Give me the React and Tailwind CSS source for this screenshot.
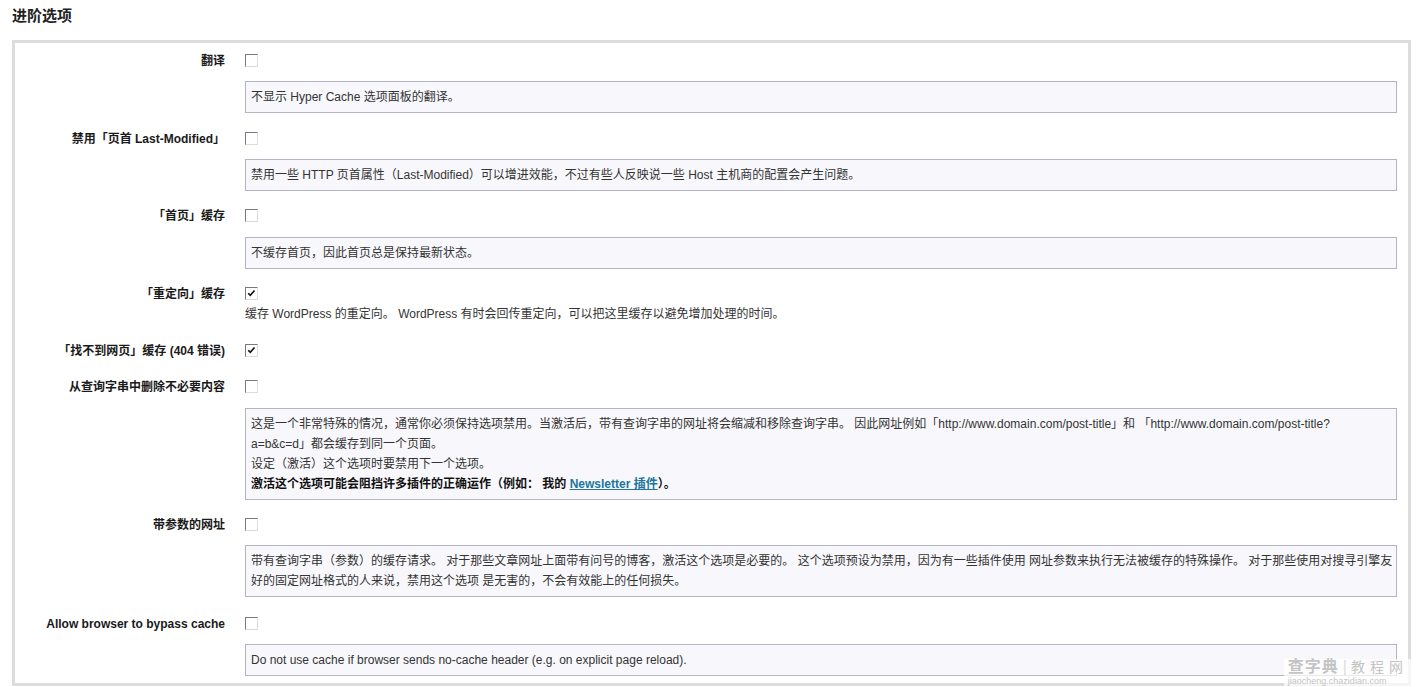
import React from "react";

const FONT = "font-['Liberation_Sans','Noto_Sans_CJK_SC',sans-serif]";

function Checkbox({ checked }) {
  return (
    <span className="relative block w-[13px] h-[13px] bg-white border border-t-[#7a7a7a] border-l-[#7a7a7a] border-r-[#dcdcdc] border-b-[#dcdcdc]">
      {checked && (
        <svg viewBox="0 0 11 11" className="absolute left-[1px] top-[1px] w-[9px] h-[9px]">
          <path d="M1.5 5.2 L4 7.8 L9.2 1.8" fill="none" stroke="#111" strokeWidth="2" />
        </svg>
      )}
    </span>
  );
}

function Option({ label, checked, className, boxClass, children, plain }) {
  return (
    <div className={className}>
      <div className="flex items-center h-6">
        <div className="w-[210px] pt-[1px] text-right text-[12px] font-bold text-[#1a1a1a] whitespace-nowrap">
          {label}
        </div>
        <div className="ml-5">
          <Checkbox checked={checked} />
        </div>
      </div>
      {children && (
        <div className="ml-[230px]">
          {plain ? (
            <div className="text-[12px] leading-[18px] text-[#333]">{children}</div>
          ) : (
            <div
              className={`${boxClass} border border-[#b4b4c4] bg-[#f8f8fc] px-[5px] py-[5px] text-[12px] leading-5 text-[#333] whitespace-nowrap`}
            >
              {children}
            </div>
          )}
        </div>
      )}
    </div>
  );
}

export default function App() {
  return (
    <div className={`${FONT} relative h-[687px] bg-white pt-2 pl-3 pr-[13px] overflow-hidden`}>
      <h2 className="text-[15px] leading-4 font-bold text-[#222] mb-4">进阶选项</h2>

      <div className="border-[3px] border-[#dcdcdc] bg-white pt-[5px] pb-[7px] pr-[11px] h-[646px]">
        <Option label="翻译" className="" boxClass="mt-[9px]">
          不显示 Hyper Cache 选项面板的翻译。
        </Option>

        <Option label="禁用「页首 Last-Modified」" className="mt-[13px]" boxClass="mt-[9px]">
          禁用一些 HTTP 页首属性（Last-Modified）可以增进效能，不过有些人反映说一些 Host 主机商的配置会产生问题。
        </Option>

        <Option label="「首页」缓存" className="mt-3" boxClass="mt-[10px]">
          不缓存首页，因此首页总是保持最新状态。
        </Option>

        <Option label="「重定向」缓存" checked className="mt-3" plain>
          缓存 WordPress 的重定向。 WordPress 有时会回传重定向，可以把这里缓存以避免增加处理的时间。
        </Option>

        <Option label="「找不到网页」缓存 (404 错误)" checked className="mt-[15px]" />

        <Option label="从查询字串中删除不必要内容" className="mt-3" boxClass="mt-[10px]">
          这是一个非常特殊的情况，通常你必须保持选项禁用。当激活后，带有查询字串的网址将会缩减和移除查询字串。 因此网址例如「http://www.domain.com/post-title」和 「http://www.domain.com/post-title?
          <br />
          a=b&amp;c=d」都会缓存到同一个页面。
          <br />
          设定（激活）这个选项时要禁用下一个选项。
          <br />
          <b className="text-[#111]">
            激活这个选项可能会阻挡许多插件的正确运作（例如： 我的{" "}
            <a href="#" className="text-[#21759b] underline">
              Newsletter 插件
            </a>
            ）。
          </b>
        </Option>

        <Option label="带参数的网址" className="mt-3" boxClass="mt-[9px]">
          带有查询字串（参数）的缓存请求。 对于那些文章网址上面带有问号的博客，激活这个选项是必要的。 这个选项预设为禁用，因为有一些插件使用 网址参数来执行无法被缓存的特殊操作。 对于那些使用对搜寻引擎友
          <br />
          好的固定网址格式的人来说，禁用这个选项 是无害的，不会有效能上的任何损失。
        </Option>

        <Option label="Allow browser to bypass cache" className="mt-[14px]" boxClass="mt-[9px]">
          Do not use cache if browser sends no-cache header (e.g. on explicit page reload).
        </Option>
      </div>

      <div className="absolute right-[12px] bottom-0 bg-white/70 px-1 text-[#c4c4c4] leading-none whitespace-nowrap">
        <div className="flex items-center gap-1 text-[16px]">
          <span className="font-bold tracking-[1px]">查字典</span>
          <span className="text-[#ddd]">|</span>
          <span className="text-[14px] tracking-[5px]">教程网</span>
        </div>
        <div className="text-[9px] mt-[2px] mb-[1px]">jiaocheng.chazidian.com</div>
      </div>
    </div>
  );
}
